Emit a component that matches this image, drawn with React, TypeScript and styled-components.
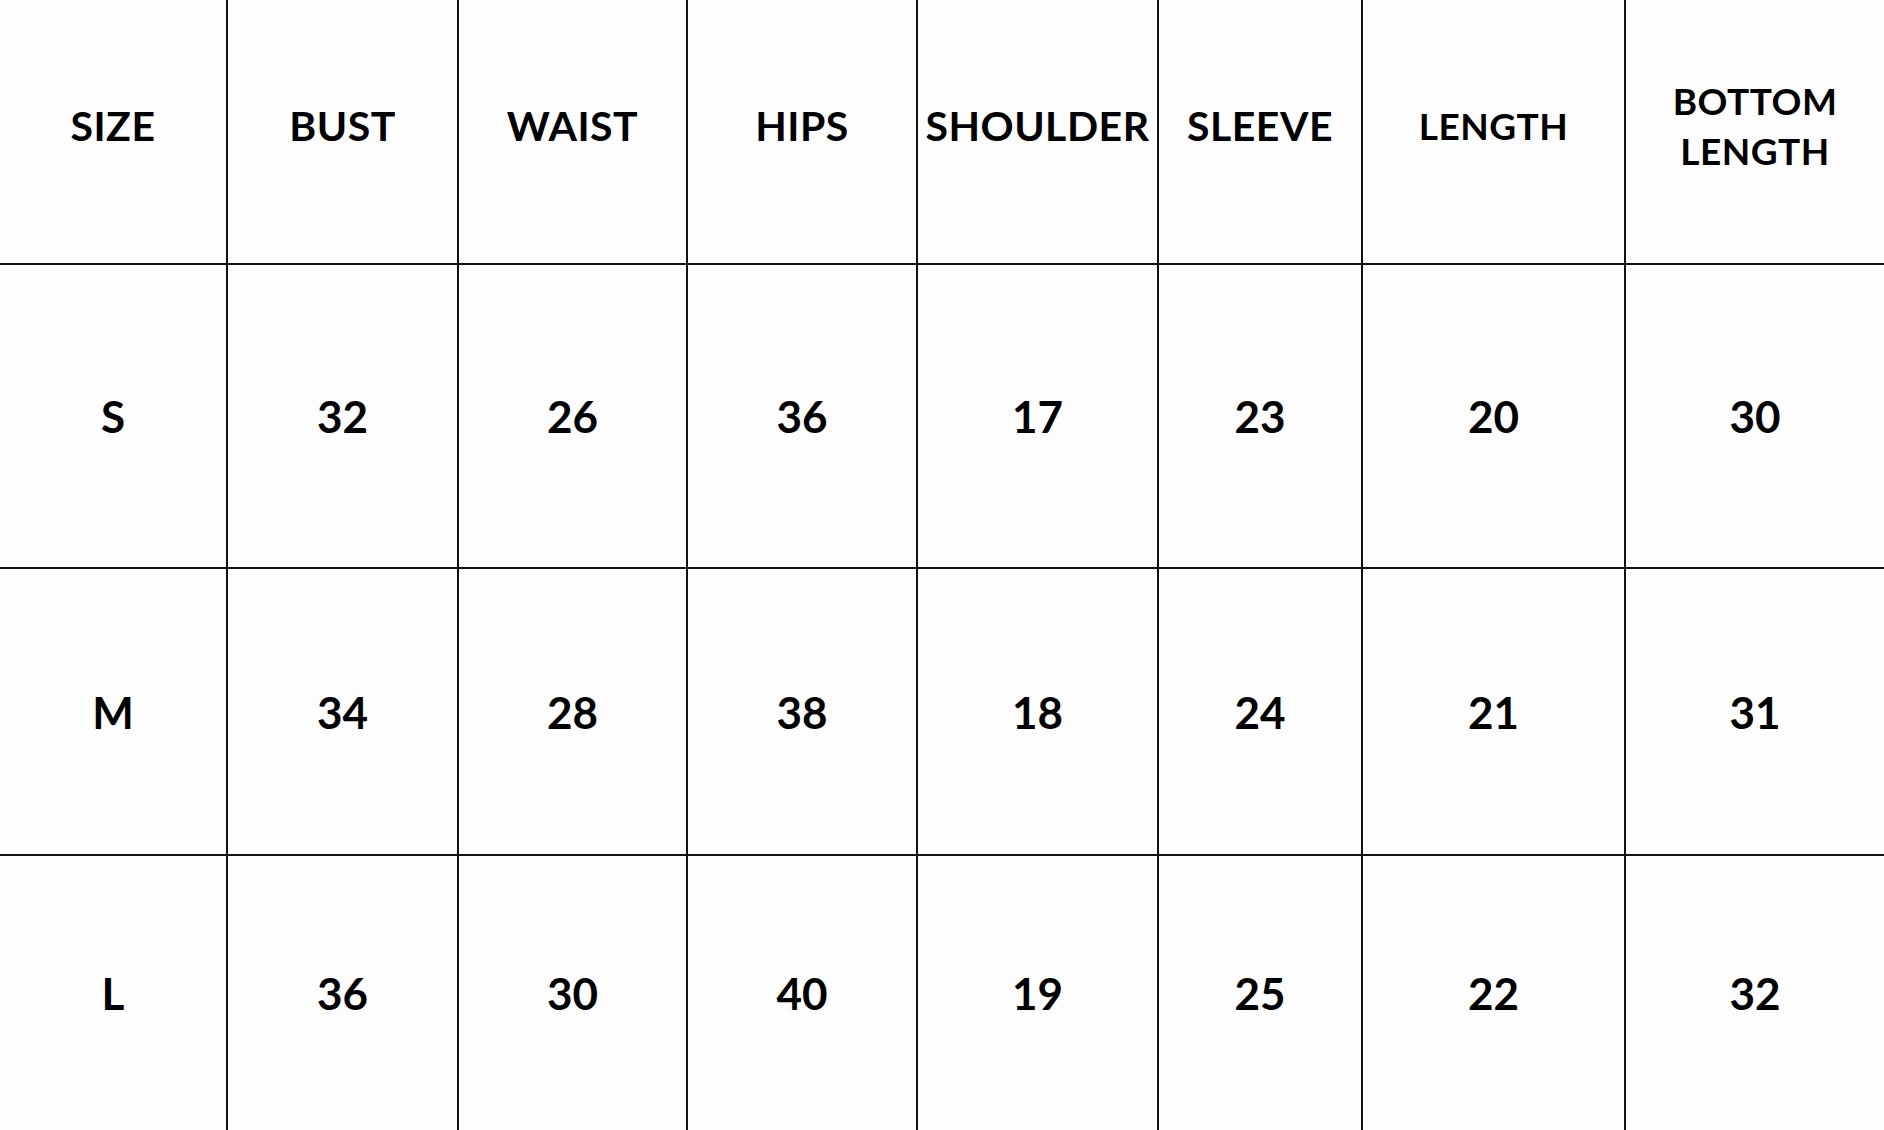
import React from 'react'
import styled, { createGlobalStyle } from 'styled-components'

const headers = ['SIZE', 'BUST', 'WAIST', 'HIPS', 'SHOULDER', 'SLEEVE', 'LENGTH', 'BOTTOM LENGTH']

const rows = [
  ['S', '32', '26', '36', '17', '23', '20', '30'],
  ['M', '34', '28', '38', '18', '24', '21', '31'],
  ['L', '36', '30', '40', '19', '25', '22', '32'],
]

// these two headers are set a little smaller in the chart
const small = ['LENGTH', 'BOTTOM LENGTH']

const App = () => {
  return (
    <>
      <Global />
      <Page>
        <Chart>
          {headers.map((h, i) => (
            <HeadCell
              key={h}
              last={i === headers.length - 1}
              small={small.includes(h)}
              wrap={h.includes(' ')}
            >
              {h}
            </HeadCell>
          ))}
          {rows.map((r, ri) =>
            r.map((v, ci) => (
              <Cell key={ri + '-' + ci} last={ci === r.length - 1} bottom={ri === rows.length - 1}>
                {v}
              </Cell>
            ))
          )}
        </Chart>
      </Page>
    </>
  )
}

export default App

const Global = createGlobalStyle`
body {
  margin: 0;
  background: #fdfdfd;
  overflow: hidden;
}
`
const Page = styled.div`
width: 1884px;
height: 1130px;
background: #fdfdfd;
color: #000;
font-family: Lato, "Open Sans", sans-serif;
`
const Chart = styled.div`
display: grid;
grid-template-columns: 228px 231px 229px 230px 241px 204px 263px 258px;
grid-template-rows: 265px 304px 287px 274px;
`
const HeadCell = styled.div<{ last?: boolean; small?: boolean; wrap?: boolean }>`
display: flex;
align-items: center;
justify-content: center;
text-align: center;
box-sizing: border-box;
padding: 0 ${p => (p.wrap ? '70px' : '0')} 12px;
border-right: ${p => (p.last ? 'none' : '2px solid #111')};
border-bottom: 2px solid #111;
font-weight: 700;
font-size: ${p => (p.small ? '37px' : '41px')};
line-height: 50px;
letter-spacing: 0.5px;
`
const Cell = styled.div<{ last?: boolean; bottom?: boolean }>`
display: flex;
align-items: center;
justify-content: center;
box-sizing: border-box;
border-right: ${p => (p.last ? 'none' : '2px solid #111')};
border-bottom: ${p => (p.bottom ? 'none' : '2px solid #111')};
font-weight: 700;
font-size: 44px;
`
